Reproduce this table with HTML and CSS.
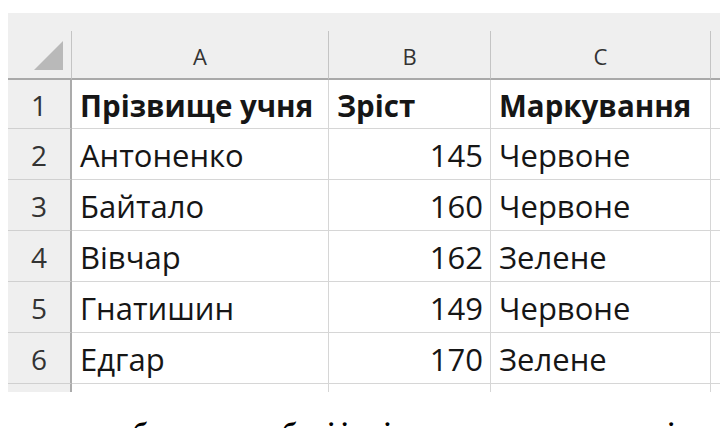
FILE: index.html
```html
<!DOCTYPE html>
<html lang="uk">
<head>
<meta charset="utf-8">
<title>Таблиця</title>
<link rel="stylesheet" href="styles.css">
</head>
<body>
<div class="sheet">
  <div class="strip"></div>
  <div class="corner"><svg class="tri" width="29" height="29" viewBox="0 0 29 29"><polygon points="29,0 29,29 0,29" fill="#b9b9b9"/></svg></div>
  <div class="colhead">A</div>
  <div class="colhead">B</div>
  <div class="colhead">C</div>
  <div class="colhead edge"></div>

  <div class="rownum r1">1</div>
  <div class="cell bold">Прізвище учня</div>
  <div class="cell bold">Зріст</div>
  <div class="cell bold">Маркування</div>
  <div class="cell edge"></div>

  <div class="rownum">2</div>
  <div class="cell">Антоненко</div>
  <div class="cell num">145</div>
  <div class="cell">Червоне</div>
  <div class="cell edge"></div>

  <div class="rownum">3</div>
  <div class="cell">Байтало</div>
  <div class="cell num">160</div>
  <div class="cell">Червоне</div>
  <div class="cell edge"></div>

  <div class="rownum">4</div>
  <div class="cell">Вівчар</div>
  <div class="cell num">162</div>
  <div class="cell">Зелене</div>
  <div class="cell edge"></div>

  <div class="rownum">5</div>
  <div class="cell">Гнатишин</div>
  <div class="cell num">149</div>
  <div class="cell">Червоне</div>
  <div class="cell edge"></div>

  <div class="rownum">6</div>
  <div class="cell">Едгар</div>
  <div class="cell num">170</div>
  <div class="cell">Зелене</div>
  <div class="cell edge"></div>

  <div class="stubnum"></div>
  <div class="stub"></div>
  <div class="stub"></div>
  <div class="stub"></div>
  <div class="stub edge"></div>
</div>
<p class="caption">бачимо, що обох і інші разом за ростом та учні</p>
</body>
</html>
```
FILE: styles.css
```css
* { box-sizing: border-box; }
html, body { margin: 0; padding: 0; background: #ffffff; }
body {
  width: 720px;
  height: 428px;
  overflow: hidden;
  padding-top: 13px;
  font-family: "Open Sans", "Noto Sans", sans-serif;
  color: #161616;
}
.sheet {
  margin-left: 8px;
  display: grid;
  grid-template-columns: 64px 257px 162px 220px 1fr;
  grid-template-rows: 18px 49px 49px 51px 51px 51px 51px 51px 8px;
}
.strip {
  grid-column: 1 / -1;
  background: #efefef;
}
.corner {
  background: #efefef;
  border-right: 1px solid #c4c4c4;
  border-bottom: 2px solid #a9a9a9;
  display: flex;
  align-items: flex-end;
  justify-content: flex-end;
  padding: 0 8px 8px 0;
}
.tri { display: block; }
.colhead {
  background: #efefef;
  border-right: 1px solid #c4c4c4;
  border-bottom: 2px solid #a9a9a9;
  display: flex;
  align-items: center;
  justify-content: center;
  font-size: 22px;
  color: #333333;
  padding-top: 2px;
}
.colhead.edge { border-right: none; }
.rownum {
  background: #efefef;
  border-right: 2px solid #ababab;
  border-bottom: 1px solid #d0d0d0;
  display: flex;
  align-items: center;
  justify-content: center;
  font-size: 28px;
  color: #333333;
  padding-top: 2px;
}
.cell {
  border-right: 1px solid #d6d6d6;
  border-bottom: 1px solid #d6d6d6;
  display: flex;
  align-items: center;
  padding: 2px 8px 0 8px;
  font-size: 31px;
  white-space: nowrap;
  overflow: hidden;
}
.cell.bold { font-weight: 700; font-size: 29.5px; }
.cell.num { justify-content: flex-end; padding-right: 7px; }
.cell.edge { border-right: none; }
.stubnum {
  background: #efefef;
  border-right: 2px solid #ababab;
}
.stub { border-right: 1px solid #d6d6d6; }
.stub.edge { border-right: none; }
.caption {
  margin: 27px 0 0 133px;
  font-family: "Liberation Serif", serif;
  font-size: 26px;
  line-height: 26px;
  font-weight: 700;
  font-style: italic;
  letter-spacing: -0.2px;
  white-space: nowrap;
  color: #000000;
}
```
